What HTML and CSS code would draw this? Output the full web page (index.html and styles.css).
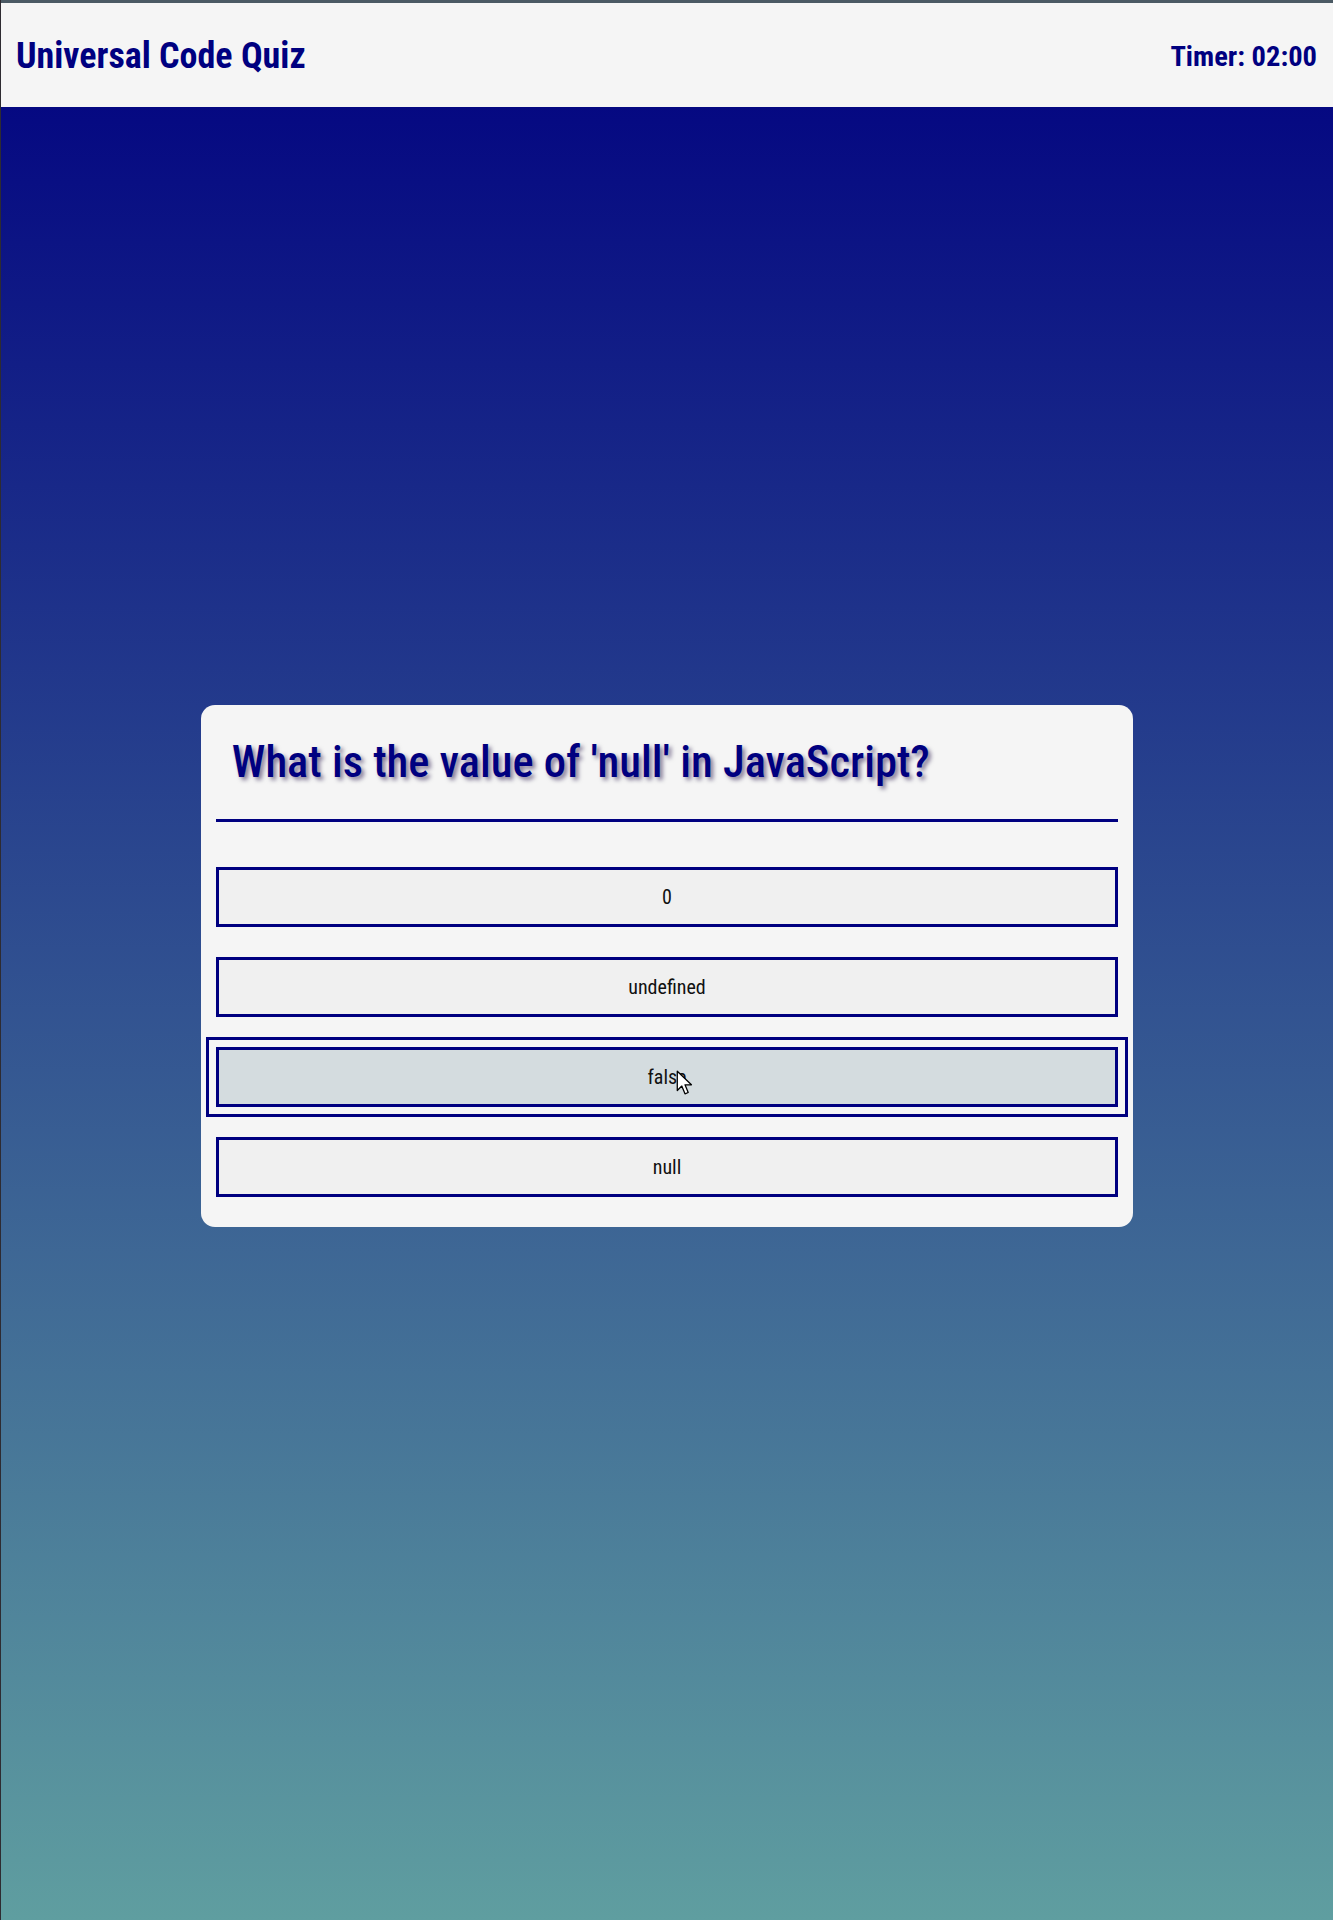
FILE: index.html
```html
<!DOCTYPE html>
<html lang="en">
<head>
<meta charset="utf-8">
<title>Universal Code Quiz</title>
<link rel="stylesheet" href="styles.css">
</head>
<body>
<header class="topbar">
  <h1 class="brand">Universal Code Quiz</h1>
  <div class="timer">Timer: 02:00</div>
</header>
<main class="stage">
  <section class="card">
    <h2 class="question">What is the value of 'null' in JavaScript?</h2>
    <hr class="rule">
    <div class="answers">
      <button class="answer">0</button>
      <button class="answer">undefined</button>
      <button class="answer is-hover">false<svg class="cursor" width="18" height="27" viewBox="0 0 14 21"><path d="M1 1 L1 16 L4.5 12.5 L7 18.5 L9.5 17.5 L7 11.5 L12 11.5 Z" fill="#fff" stroke="#000" stroke-width="1" stroke-linejoin="round"/></svg></button>
      <button class="answer">null</button>
    </div>
  </section>
</main>
</body>
</html>
```
FILE: styles.css
```css
* { box-sizing: border-box; }

html, body {
  margin: 0;
  padding: 0;
}

body {
  min-height: 1920px;
  font-family: "Roboto Condensed", Roboto, "Liberation Sans", sans-serif;
  font-stretch: condensed;
  background: linear-gradient(to bottom, #000080 0%, #5f9ea0 100%);
  border-left: 1px solid #2e2b31;
}

.topbar {
  height: 107px;
  border-top: 3px solid #4b5a64;
  background: #f5f5f5;
  display: flex;
  align-items: center;
  justify-content: space-between;
  padding: 2px 16px 0 15px;
}

.brand {
  margin: 0;
  font-size: 36px;
  font-weight: 700;
  color: #000080;
}

.timer {
  font-size: 28.5px;
  font-weight: 700;
  color: #000080;
}

.stage {
  display: flex;
  justify-content: center;
  padding-top: 598px;
}

.card {
  width: 70%;
  background: #f5f5f5;
  border-radius: 14px;
  padding: 15px;
}

.question {
  margin: 16px 0 0;
  padding: 0 16px;
  font-size: 44.5px;
  font-weight: 500;
  line-height: 52px;
  color: #000080;
  text-shadow: 3px 3px 4px rgba(20, 0, 60, 0.5);
}

.rule {
  margin: 31px 0 30px;
  border: 0;
  height: 3px;
  background: #000080;
}

.answers {
  display: flex;
  flex-direction: column;
}

.answer {
  position: relative;
  display: block;
  width: 100%;
  height: 60px;
  margin: 15px 0;
  border: 3px solid #000080;
  background: #f0f0f0;
  font-family: inherit;
  font-stretch: condensed;
  font-size: 20px;
  color: #111;
  cursor: pointer;
}

.answer.is-hover {
  background: #d4dcdf;
  outline: 3px solid #000080;
  outline-offset: 7px;
}

.cursor {
  position: absolute;
  left: 457px;
  top: 20px;
}
```
